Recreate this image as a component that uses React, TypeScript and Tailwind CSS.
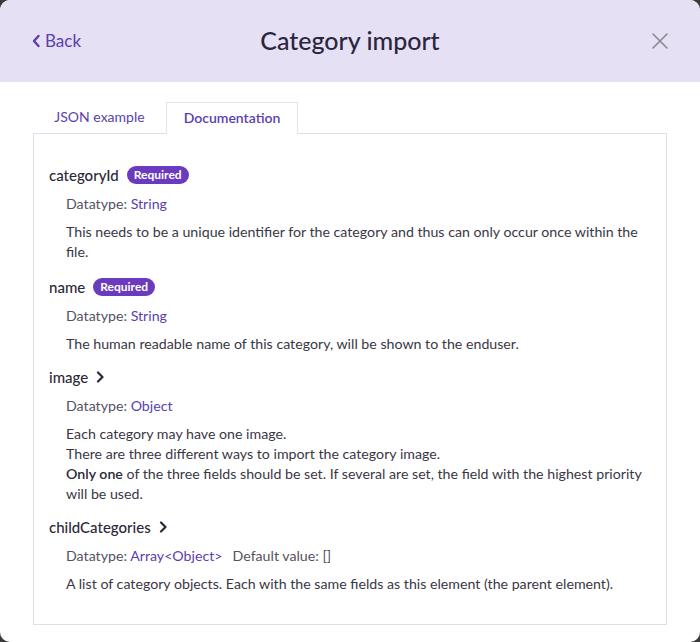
import React from 'react';

const fieldClass = 'text-[15px] font-medium text-[#2b2838]';

const Required = () => (
  <span className="ml-2 inline-flex items-center h-[18px] px-[7px] rounded-full bg-[#6a3bbf] text-white text-[12px] font-bold leading-none">
    Required
  </span>
);

const Chevron = () => (
  <svg className="ml-[7px] w-[10px] h-[12px]" viewBox="0 0 10 12" fill="none" stroke="#2b2838" strokeWidth={2.2} strokeLinecap="round" strokeLinejoin="round">
    <path d="M3 1.5l4.5 4.5L3 10.5" />
  </svg>
);

const Datatype = ({ type, def }: { type: string; def?: string }) => (
  <div className="pl-[17px] mt-[9px] text-[14.2px] leading-[20px] text-[#55525e]">
    Datatype: <span className="text-[#5b3fae]">{type}</span>
    {def && <span className="ml-[10px]">Default value: {def}</span>}
  </div>
);

const Desc = ({ children }: { children: React.ReactNode }) => (
  <div className="pl-[17px] mt-[8px] text-[14.2px] leading-[20px] text-[#3a3744]">{children}</div>
);

export default function App() {
  return (
    <div className="w-[700px] h-[642px] bg-[#3a3a3a]" style={{ fontFamily: 'Lato, "Noto Sans", sans-serif' }}>
      <div className="w-full h-full bg-white rounded-[10px] overflow-hidden flex flex-col">
        <div className="h-[82px] bg-[#e6e0f4] flex items-center pl-[32px] pr-[31px] relative">
          <button className="flex items-center text-[#5b3fae] text-[17px]">
            <svg className="w-[9px] h-[14px] mr-[4px]" viewBox="0 0 9 14" fill="none" stroke="currentColor" strokeWidth={2.4} strokeLinecap="round" strokeLinejoin="round">
              <path d="M6.5 2L2 7l4.5 5" />
            </svg>
            Back
          </button>
          <h1 className="absolute left-0 right-0 text-center text-[25px] font-medium text-[#2b2640] pointer-events-none">Category import</h1>
          <svg className="ml-auto w-[18px] h-[18px]" viewBox="0 0 18 18" stroke="#8a8794" strokeWidth={1.6} strokeLinecap="round">
            <path d="M2 2l14 14M16 2L2 16" />
          </svg>
        </div>
        <div className="px-[33px] pt-[20px]">
          <div className="flex text-[14px] h-[31px]">
            <div className="w-[133px] flex items-center justify-center text-[#5b3fae] pb-[2px]">JSON example</div>
            <div className="w-[132px] flex items-center justify-center text-[#5b3fae] font-semibold border-x border-t border-[#e4e0ec] bg-white -mb-px relative z-10 pb-[3px]">Documentation</div>
          </div>
          <div className="h-[492px] border border-[#e0dcea] px-[15px] pt-[31px]">
            <div className="flex items-center h-[20px]">
              <span className={fieldClass}>categoryId</span>
              <Required />
            </div>
            <Datatype type="String" />
            <Desc>This needs to be a unique identifier for the category and thus can only occur once within the file.</Desc>

            <div className="flex items-center h-[20px] mt-[15px]">
              <span className={fieldClass}>name</span>
              <Required />
            </div>
            <Datatype type="String" />
            <Desc>The human readable name of this category, will be shown to the enduser.</Desc>

            <div className="flex items-center h-[20px] mt-[13px]">
              <span className={fieldClass}>image</span>
              <Chevron />
            </div>
            <Datatype type="Object" />
            <Desc>
              Each category may have one image.
              <br />
              There are three different ways to import the category image.
              <br />
              <span className="font-semibold text-[#2b2838]">Only one</span> of the three fields should be set. If several are set, the field with the highest priority will be used.
            </Desc>

            <div className="flex items-center h-[20px] mt-[13px]">
              <span className={fieldClass}>childCategories</span>
              <Chevron />
            </div>
            <Datatype type="Array<Object>" def="[]" />
            <Desc>A list of category objects. Each with the same fields as this element (the parent element).</Desc>
          </div>
        </div>
      </div>
    </div>
  );
}
